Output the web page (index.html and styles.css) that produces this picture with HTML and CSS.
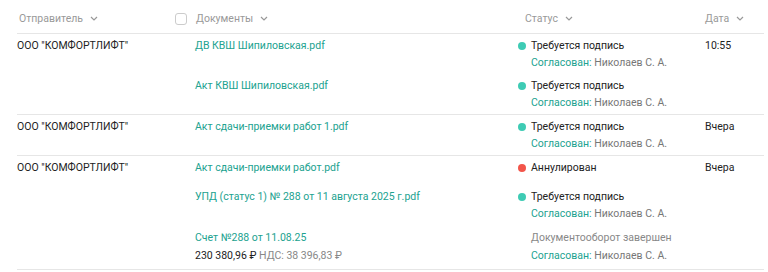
FILE: index.html
```
<!DOCTYPE html>
<html lang="ru">
<head>
  <meta charset="UTF-8" />
  <meta name="viewport" content="width=device-width, initial-scale=1" />
  <title>Документы</title>
  <link rel="stylesheet" href="styles.css">
</head>
<body>
  <div class="table">
    <!-- Header -->
    <div class="head">
      <div class="th th-sender">Отправитель <svg class="chev" viewBox="0 0 8 5"><path d="M1 1l3 3 3-3"/></svg></div>
      <div class="th th-docs"><span class="check"></span>Документы <svg class="chev" viewBox="0 0 8 5"><path d="M1 1l3 3 3-3"/></svg></div>
      <div class="th th-status">Статус <svg class="chev" viewBox="0 0 8 5"><path d="M1 1l3 3 3-3"/></svg></div>
      <div class="th th-date">Дата <svg class="chev" viewBox="0 0 8 5"><path d="M1 1l3 3 3-3"/></svg></div>
    </div>

    <!-- Row 1 -->
    <div class="row">
      <div class="sender">ООО "КОМФОРТЛИФТ"</div>
      <div class="items">
        <div class="item">
          <a class="doc">ДВ КВШ Шипиловская.pdf</a>
          <div class="status">
            <div class="state"><span class="dot"></span>Требуется подпись</div>
            <div class="approved"><span>Согласован:</span> Николаев С. А.</div>
          </div>
        </div>
        <div class="item">
          <a class="doc">Акт КВШ Шипиловская.pdf</a>
          <div class="status">
            <div class="state"><span class="dot"></span>Требуется подпись</div>
            <div class="approved"><span>Согласован:</span> Николаев С. А.</div>
          </div>
        </div>
      </div>
      <div class="date">10:55</div>
    </div>

    <!-- Row 2 -->
    <div class="row">
      <div class="sender">ООО "КОМФОРТЛИФТ"</div>
      <div class="items">
        <div class="item">
          <a class="doc">Акт сдачи-приемки работ 1.pdf</a>
          <div class="status">
            <div class="state"><span class="dot"></span>Требуется подпись</div>
            <div class="approved"><span>Согласован:</span> Николаев С. А.</div>
          </div>
        </div>
      </div>
      <div class="date">Вчера</div>
    </div>

    <!-- Row 3 -->
    <div class="row">
      <div class="sender">ООО "КОМФОРТЛИФТ"</div>
      <div class="items">
        <div class="item item-single">
          <a class="doc">Акт сдачи-приемки работ.pdf</a>
          <div class="status">
            <div class="state"><span class="dot dot-red"></span>Аннулирован</div>
          </div>
        </div>
        <div class="item">
          <a class="doc">УПД (статус 1) № 288 от 11 августа 2025 г.pdf</a>
          <div class="status">
            <div class="state"><span class="dot"></span>Требуется подпись</div>
            <div class="approved"><span>Согласован:</span> Николаев С. А.</div>
          </div>
        </div>
        <div class="item item-sum">
          <div>
            <a class="doc">Счет №288 от 11.08.25</a>
            <div class="sum">230 380,96 ₽ <span>НДС: 38 396,83 ₽</span></div>
          </div>
          <div class="status">
            <div class="state state-done">Документооборот завершен</div>
            <div class="approved"><span>Согласован:</span> Николаев С. А.</div>
          </div>
        </div>
      </div>
      <div class="date">Вчера</div>
    </div>
  </div>
</body>
</html>
```

FILE: styles.css
```
body {
  margin: 0;
  font-family: Roboto, Arial, sans-serif;
  font-size: 10.5px;
  line-height: 17px;
  color: #222;
  background: #fff;
}

.table {
  margin: 0 4px 0 17px;
}

.head,
.row {
  display: grid;
  grid-template-columns: 158px 1fr 187px 59px;
  border-bottom: 1px solid #e6e6e6;
}

.head {
  padding: 10px 0 6px;
  color: #999;
}

.th {
  display: flex;
  align-items: center;
}

.th-sender {
  padding-left: 2px;
}

.th-status {
  grid-column: 3;
  padding-left: 7px;
}

.chev {
  width: 8px;
  height: 5px;
  margin-left: 7px;
  fill: none;
  stroke: #999;
  stroke-width: 1.2;
}

.check {
  width: 10px;
  height: 10px;
  margin-right: 9px;
  border: 1px solid #ccc;
  border-radius: 3px;
}

.sender {
  padding-top: 3px;
}

.items {
  grid-column: 2 / 4;
}

.item {
  display: grid;
  grid-template-columns: 1fr 187px;
  padding: 3px 0;
}

.item-single {
  padding-bottom: 9px;
}

.item-sum {
  padding: 4px 0;
  line-height: 18px;
}

.doc {
  display: block;
  padding-left: 20px;
  color: #21a28f;
}

.sum {
  padding-left: 20px;
}

.sum span {
  color: #888;
}

.state {
  display: flex;
  align-items: center;
}

.state-done {
  padding-left: 13px;
  color: #888;
}

.dot {
  width: 8px;
  height: 8px;
  margin-right: 5px;
  border-radius: 50%;
  background: #3ecbb4;
}

.dot-red {
  background: #f2554a;
}

.approved {
  padding-left: 13px;
  color: #777;
}

.approved span {
  color: #21a28f;
}

.date {
  padding-top: 3px;
}
```
